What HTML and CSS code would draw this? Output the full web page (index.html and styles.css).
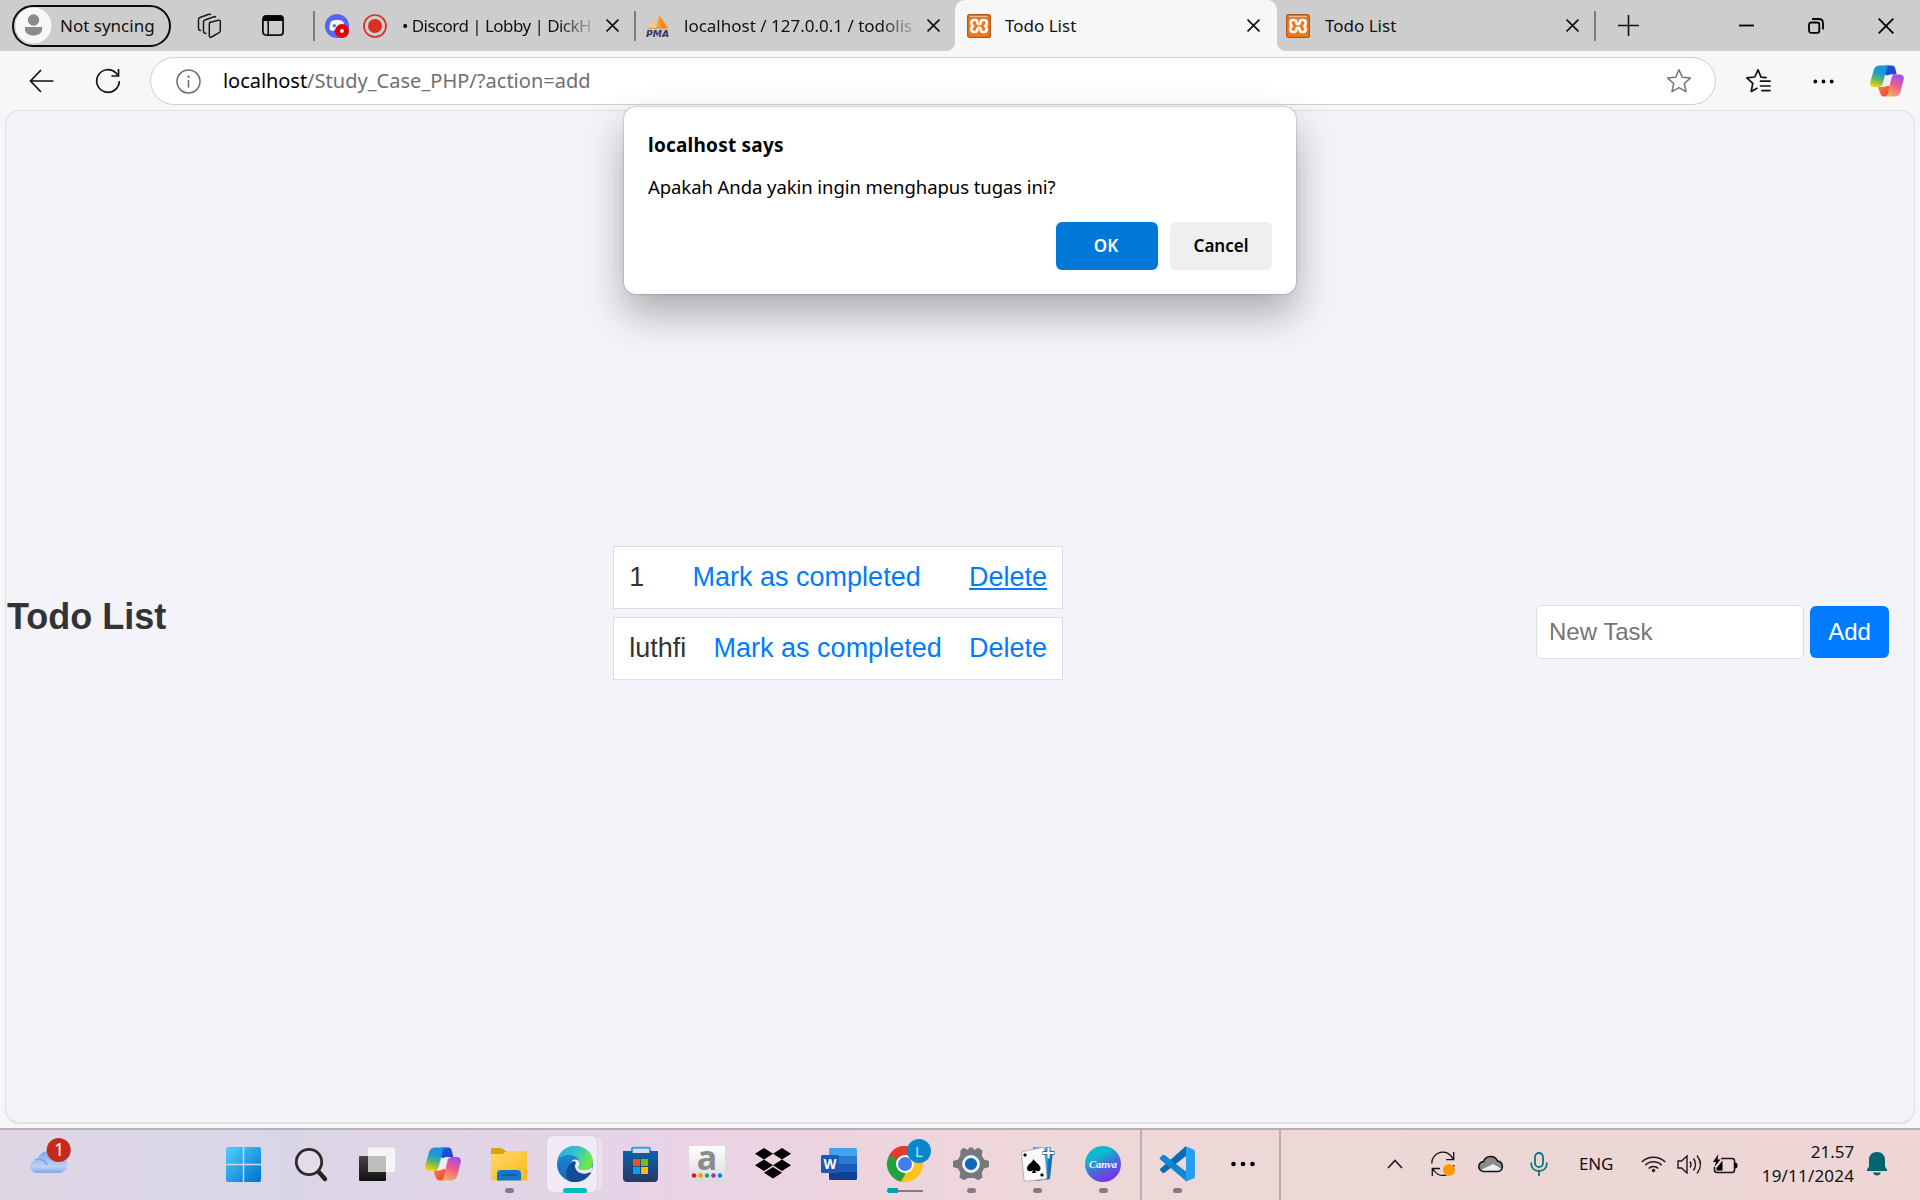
FILE: index.html
```html
<!DOCTYPE html>
<html lang="id">
<head>
<meta charset="utf-8">
<title>Todo List</title>
<link rel="stylesheet" href="styles.css">
</head>
<body>
<svg class="defs" width="0" height="0">
  <defs>
    <linearGradient id="cpA" x1="0.6" y1="0" x2="0.35" y2="1"><stop offset="0" stop-color="#1a8fe8"/><stop offset=".35" stop-color="#1b9bd8"/><stop offset=".62" stop-color="#52b471"/><stop offset="1" stop-color="#f5d000"/></linearGradient>
    <linearGradient id="cpB" x1="0" y1="0" x2="1" y2="1"><stop offset="0" stop-color="#1c55d8"/><stop offset="1" stop-color="#1d46c8"/></linearGradient>
    <linearGradient id="cpC" x1="0.7" y1="0" x2="0.3" y2="1"><stop offset="0" stop-color="#a04bf0"/><stop offset=".45" stop-color="#ec5a92"/><stop offset="1" stop-color="#ffad52"/></linearGradient>
    <linearGradient id="cpD" x1="0" y1="0" x2="1" y2="1"><stop offset="0" stop-color="#f7893a"/><stop offset="1" stop-color="#ee3a3a"/></linearGradient>
    <symbol id="copilot" viewBox="0 0 36 34">
      <path d="M16 .5h7c3 0 3.600 2 4.300 5l1 4.500h-4c-2.500 0-4.500.3-6.300 1.500L15 9z" fill="url(#cpB)"/>
      <path d="M8.500 23.500c3 0 6-.2 9-1.500h3l-1 8c-.6 2.500-1.500 3.500-3.500 3.500h-1.500c-3.500 0-4-4-6-10z" fill="url(#cpD)"/>
      <path d="M10.500.5H21c-2 .3-2.800 2-3.500 4.500L13.800 18.500c-.8 3-1.800 5-4.800 5H4.500C.8 23.500-.4 21.200.4 17.800L4 5C5 1.800 7 .5 10.500.5z" fill="url(#cpA)"/>
      <path d="M25.500 33.500H15.500c2 0 2.800-1.500 3.500-4L22.300 15.500c.8-3.200 1.700-5.500 4.900-5.500h4.300c3.700 0 4.900 2.300 4.100 5.700L32.300 28.500c-1 3.500-3.300 5-6.800 5z" fill="url(#cpC)"/>
      <path d="M17 11.800c1.600-1.200 3.500-1.600 6.600-1.700-1.400 1.400-2 3.800-2.600 6.400l-1 4.300c-1.300 1.800-3.800 2.500-8 2.700 1.200-1.200 2-3.300 2.600-5.600z" fill="#f1edf6"/>
    </symbol>
    <linearGradient id="xa" x1="0" y1="0" x2="0" y2="1"><stop offset="0" stop-color="#d8722c"/><stop offset=".3" stop-color="#f07a22"/><stop offset="1" stop-color="#f2761a"/></linearGradient>
    <symbol id="xampp" viewBox="0 0 24 24">
      <rect x=".6" y=".6" width="22.800" height="22.800" rx="2" fill="url(#xa)" stroke="#b3571a" stroke-width="1.200"/>
      <path d="M3 2.500h18" stroke="#f7b98a" stroke-width="1.200"/>
      <path d="M7 6H8q2.300 0 2.300 2.200T12 10.300t1.700-2.100T16 6h1q2.700 0 2.700 2.700T18 12q1.700.7 1.700 3.300T17 18h-1q-2.300 0-2.300-2.200T12 13.700t-1.700 2.100T8 18H7q-2.700 0-2.700-2.700T6 12Q4.300 11.300 4.300 8.700T7 6z" fill="none" stroke="#fff" stroke-width="2.500" stroke-linejoin="round"/>
    </symbol>
    <symbol id="close" viewBox="0 0 12 12"><path d="M.5.5l11 11M11.500.5l-11 11" stroke="#111" stroke-width="1.500" fill="none"/></symbol>
  </defs>
</svg>

<div class="browser">
  <header class="tabbar">
    <div class="profile">
      <svg width="37" height="37" viewBox="0 0 37 37"><circle cx="18.500" cy="18.500" r="18" fill="#f7f7f7"/><circle cx="18.500" cy="13" r="5.700" fill="#8a8a8a"/><path d="M10 20h17v2.500c0 3.500-3.500 6-8.500 6s-8.500-2.500-8.500-6z" fill="#8a8a8a"/></svg>
      <span class="ui t-profile">Not syncing</span>
    </div>
    <svg class="ic-work" width="26" height="26" viewBox="0 0 26 26" fill="none" stroke="#1b1b1b" stroke-width="1.500" stroke-linejoin="round"><path d="M13.500 9.500l9-2.300c1-.2 1.800.3 1.800 1.300v9.300c0 .8-.4 1.400-1.200 1.800L15.500 24c-1.200.5-2.200 0-2.200-1.200V11c0-.8.200-1.300 1.200-1.700z"/><path d="M10.500 20.500C8.500 20.500 7.500 20 7.500 18.500V9c0-1 .5-1.700 1.400-2L18 3.700c.8-.2 1.500 0 1.800.8M5 17.500C3.500 17.500 2.500 17 2.500 15.500V6.500c0-1 .5-1.700 1.400-2L13 1.300c.8-.2 1.500 0 1.800.8"/></svg>
    <svg class="ic-acts" width="22" height="21" viewBox="0 0 22 21"><rect x=".9" y=".9" width="20.200" height="19.200" rx="3" fill="none" stroke="#111" stroke-width="1.800"/><path d="M1 6V3.500C1 1.800 2 1 3.500 1h15C20 1 21 2 21 3.500V6z" fill="#000"/><path d="M6.200 6v14" stroke="#111" stroke-width="1.600"/></svg>
    <i class="sep s1"></i>
    <div class="tab tab-a">
      <svg width="24" height="24" viewBox="0 0 24 24"><circle cx="12" cy="12" r="12" fill="#5865f2"/><path d="M6 7.500c2-1.500 4-1.500 6-1.500s4 0 6 1.500c1 2 1.700 5 1.500 8-1.500 1.200-3 1.500-4 1.500l-1-1.500h-5l-1 1.500c-1 0-2.500-.3-4-1.500-.2-3 .5-6 1.500-8z" fill="#fff"/><ellipse cx="9.300" cy="11.800" rx="1.600" ry="1.800" fill="#5865f2"/><circle cx="17" cy="17" r="7" fill="#e00000"/><circle cx="17" cy="17" r="1.900" fill="#fff"/></svg>
      <svg class="rec" width="24" height="24" viewBox="0 0 24 24"><circle cx="12" cy="12" r="11" fill="none" stroke="#d93025" stroke-width="1.700"/><circle cx="12" cy="12" r="7" fill="#d93025"/></svg>
      <span class="ui t-discord fade">• Discord | Lobby | DickH</span>
      <svg class="x" width="13" height="13"><use href="#close"/></svg>
    </div>
    <i class="sep s2"></i>
    <div class="tab tab-b">
      <svg width="24" height="25" viewBox="0 0 24 25"><path d="M13.500 0l1 15H10z" fill="#f9a02b"/><path d="M14 3l8 12-7.500 0z" fill="#f08a12"/><path d="M9.500 5v10H2z" fill="#fbc77c"/><path d="M2 15.500l20 .3" stroke="#c9a36a"/><text x="0" y="24" class="pma" textLength="23" lengthAdjust="spacingAndGlyphs">PMA</text></svg>
      <span class="ui t-pma fade">localhost / 127.0.0.1 / todolis</span>
      <svg class="x" width="13" height="13"><use href="#close"/></svg>
    </div>
    <div class="tab tab-c">
      <svg width="24" height="24"><use href="#xampp"/></svg>
      <span class="ui t-todo">Todo List</span>
      <svg class="x" width="13" height="13"><use href="#close"/></svg>
    </div>
    <div class="tab tab-d">
      <svg width="24" height="24"><use href="#xampp"/></svg>
      <span class="ui t-todo">Todo List</span>
      <svg class="x" width="13" height="13"><use href="#close"/></svg>
    </div>
    <i class="sep s3"></i>
    <svg class="ic-plus" width="21" height="21" viewBox="0 0 21 21"><path d="M10.500 0v21M0 10.500h21" stroke="#111" stroke-width="1.600"/></svg>
    <div class="winctl">
      <svg width="15" height="16" viewBox="0 0 15 16"><path d="M0 7.500h15" stroke="#000" stroke-width="1.800"/></svg>
      <svg width="16" height="16" viewBox="0 0 16 16" fill="none" stroke="#000" stroke-width="1.800"><rect x="1" y="4.500" width="10.300" height="10.300" rx="2"/><path d="M4 1h6.500C13.500 1 15 2.500 15 5.200V11.500"/></svg>
      <svg width="16" height="16" viewBox="0 0 16 16"><path d="M.7.7l14.600 14.600M15.300.7L.7 15.300" stroke="#000" stroke-width="1.800"/></svg>
    </div>
  </header>

  <div class="toolbar">
    <svg class="ic-back" width="25" height="24" viewBox="0 0 25 24" fill="none" stroke="#111" stroke-width="1.700"><path d="M12 1L1.500 12 12 23M1.500 12H24.500"/></svg>
    <svg class="ic-reload" width="26" height="26" viewBox="0 0 26 26" fill="none" stroke="#111" stroke-width="1.700"><path d="M24.300 13A11.300 11.300 0 1 1 21 5l2 2.300"/><path d="M23.500 1v7h-7"/></svg>
    <div class="address">
      <svg class="ic-info" width="25" height="25" viewBox="0 0 25 25" fill="none" stroke="#6b6b6b"><circle cx="12.500" cy="12.500" r="11.500" stroke-width="1.500"/><path d="M12.500 11v7.500" stroke-width="1.600"/><circle cx="12.500" cy="7.600" r="1.200" fill="#6b6b6b" stroke="none"/></svg>
      <span class="url"><b>localhost</b>/Study_Case_PHP/?action=add</span>
      <svg class="ic-star" width="26" height="26" viewBox="0 0 26 26"><path d="M13 1.800l3.300 7.400 8 .9-6 5.400 1.700 8.200L13 19.700l-7 4 1.700-8.200-6-5.400 8-.9z" fill="none" stroke="#757575" stroke-width="1.500" stroke-linejoin="round"/></svg>
    </div>
    <svg class="ic-fav" width="26" height="26" viewBox="0 0 26 26" fill="none" stroke="#111" stroke-width="1.700" stroke-linejoin="round" stroke-linecap="round"><path d="M21 9.700l-5-.6L13 1.800 9.800 9l-8 .9 6 5.400-1.600 8.200L12 20.300"/><path d="M15.500 13.200H25M15.500 18H25M17 22.700h8"/></svg>
    <svg class="ic-dots" width="21" height="5" viewBox="0 0 21 5"><circle cx="2.300" cy="2.500" r="1.900"/><circle cx="10.500" cy="2.500" r="1.900"/><circle cx="18.700" cy="2.500" r="1.900"/></svg>
    <svg class="ic-cop" width="34" height="32"><use href="#copilot"/></svg>
  </div>

  <main class="page">
    <h1>Todo List</h1>
    <ul class="tasks">
      <li><span>1</span><a>Mark as completed</a><a class="hover">Delete</a></li>
      <li><span>luthfi</span><a>Mark as completed</a><a>Delete</a></li>
    </ul>
    <form class="add"><input type="text" placeholder="New Task"><button type="button">Add</button></form>
  </main>

  <section class="dialog">
    <h2>localhost says</h2>
    <p>Apakah Anda yakin ingin menghapus tugas ini?</p>
    <div class="actions"><button class="ok" type="button">OK</button><button type="button">Cancel</button></div>
  </section>
</div>

<footer class="taskbar">
  <div class="widgets">
    <svg width="46" height="40" viewBox="0 0 46 40"><defs><linearGradient id="cl" x1="0" y1="0" x2="0" y2="1"><stop offset="0" stop-color="#7fa6e8"/><stop offset=".7" stop-color="#bcd2f5"/><stop offset="1" stop-color="#7ea9ea"/></linearGradient></defs><path d="M6.500 35a6.500 6.500 0 0 1 0-13 5 5 0 0 1 1-.5A11.500 11.500 0 0 1 28 18h1a8.500 8.500 0 0 1 0 17z" fill="url(#cl)"/><path d="M5 22c6-2 11 1 12 5" stroke="#7fa3df" stroke-width="1.500" fill="none"/><circle cx="28.700" cy="12" r="12" fill="#c42b1c"/><text x="29.200" y="18" class="badge">1</text></svg>
  </div>
  <div class="apps">
    <div class="app"><svg width="36" height="36" viewBox="0 0 36 36"><defs><linearGradient id="wn" x1="0" y1="0" x2="1" y2="1"><stop offset="0" stop-color="#4cd2fc"/><stop offset="1" stop-color="#0070d0"/></linearGradient></defs><path d="M-1 3q0-2 2-2h14.800v16.800H-1zM17.200 1H32q2 0 2 2v14.800H17.200zM-1 19.200h16.800V36H1q-2 0-2-2zM17.200 19.200H34V34q0 2-2 2H17.200z" fill="url(#wn)"/></svg></div>
    <div class="app"><svg width="36" height="36" viewBox="0 0 36 36"><path d="M24.500 24.500l7.500 8.500" stroke="#222" stroke-width="4.400" stroke-linecap="round"/><circle cx="16" cy="16" r="12.700" fill="#e4dde9" stroke="#2c2c2c" stroke-width="2.800"/></svg></div>
    <div class="app"><svg width="36" height="36" viewBox="0 0 36 36"><defs><linearGradient id="tv" x1="0" y1="0" x2="0" y2="1"><stop offset="0" stop-color="#484644"/><stop offset="1" stop-color="#111"/></linearGradient></defs><rect y="10" width="27" height="25" rx="1" fill="url(#tv)"/><rect x="9" y="1.500" width="27" height="24.500" rx="1" fill="#f5f5f5"/><path d="M9 10h18v16H9z" fill="#bdbdbd"/></svg></div>
    <div class="app"><svg width="36" height="36" viewBox="0 -1 36 36"><use href="#copilot" width="36" height="34"/></svg></div>
    <div class="app run"><svg width="36" height="36" viewBox="0 0 36 36"><defs><linearGradient id="fo" x1="0" y1="0" x2="1" y2="1"><stop offset="0" stop-color="#ffd96b"/><stop offset="1" stop-color="#fbb917"/></linearGradient></defs><path d="M0 9V3.500Q0 2 1.500 2H9q2 0 3.500 1.500L15 5h19.500Q36 5 36 6.500V10H0z" fill="#dfa00c"/><path d="M0 8h10q2 0 3.500-1.500T16 5h18.500Q36 5 36 6.500V33q0 1.500-1.500 1.500h-33Q0 34.500 0 33z" fill="url(#fo)"/><path d="M6 34.500V28q0-4 4-4h16q4 0 4 4v6.500z" fill="#1478c8"/><path d="M11 29h14" stroke="#0c5aa0" stroke-width="1.500" stroke-linecap="round"/></svg></div>
    <div class="app active"><svg width="36" height="36" viewBox="0 0 36 36"><defs><linearGradient id="e1" x1="0" y1="0" x2="1" y2=".4"><stop offset="0" stop-color="#2aa8e0"/><stop offset=".5" stop-color="#2fc3d2"/><stop offset="1" stop-color="#6cea45"/></linearGradient><linearGradient id="e2" x1="0" y1="0" x2="0" y2="1"><stop offset="0" stop-color="#1c90d8"/><stop offset="1" stop-color="#1268b8"/></linearGradient></defs><circle cx="18" cy="18" r="18" fill="url(#e2)"/><path d="M.8 14C2 6 9 0 18 0c10 0 18 7 18 15.500 0 6-4.500 8.500-9 8.500-4 0-6-1.500-6-2.500s1.500-1.500 1.500-4.500c0-4-4-8-10-8C7 9 2.500 11 .8 14z" fill="url(#e1)"/><path d="M12 34.500C8 31 8 22 14 17c-1 8 4 13 12 13 3 0 5.500-1 7.300-2.400C30 33 25 36 18 36c-2.500 0-4.500-.5-6-1.500z" fill="#144b94"/><path d="M21 21.500c0 1 2 2.500 6 2.500 4 0 7-1.500 8.500-4L34.500 26.500C30 29 14 30 14 17c.5-2 2-3.500 4-3.500 3 0 4.500 2 4.500 4s-1.500 3-1.500 4z" fill="#efeaf5"/><path d="M14 17c-1.500 8 4 13 12 13 3.500 0 6.500-1 7.800-2.400.5-.8-.3-1.600-1.300-1.100-6.500 3-12.500 0-14-4-.8-2-.5-4 .5-6-1.500-2-4-1.500-5 .5z" fill="#144b94"/></svg></div>
    <div class="app"><svg width="36" height="36" viewBox="0 0 36 36"><defs><linearGradient id="st" x1="0" y1="0" x2="0" y2="1"><stop offset="0" stop-color="#0c62ac"/><stop offset="1" stop-color="#26395e"/></linearGradient></defs><path d="M9 8V2.500Q9 1.800 10 1.800h16q1 0 1 .7V8" fill="none" stroke="#22a6f0" stroke-width="2"/><path d="M0 5h9v2h18V5h8v27q0 4-4 4H4q-4 0-4-4z" fill="url(#st)"/><path d="M10 13h7v7h-7z" fill="#f25022"/><path d="M18 13h7v7h-7z" fill="#7fba00"/><path d="M10 21h7v7h-7z" fill="#00a4ef"/><path d="M18 21h7v7h-7z" fill="#ffb900"/></svg></div>
    <div class="app"><svg width="36" height="36" viewBox="0 0 36 36"><defs><linearGradient id="am" x1="0" y1="0" x2="0" y2="1"><stop offset="0" stop-color="#fff"/><stop offset="1" stop-color="#d9d9d9"/></linearGradient></defs><path d="M0 0h36v36H0z" fill="url(#am)"/><text x="18" y="23.500" class="am">a</text><circle cx="5" cy="29.500" r="2.300" fill="#e11"/><circle cx="11.500" cy="29.500" r="2.300" fill="#f90"/><circle cx="18" cy="29.500" r="2.300" fill="#2a6"/><circle cx="24.500" cy="29.500" r="2.300" fill="#93c"/><circle cx="31" cy="29.500" r="2.300" fill="#08d"/></svg></div>
    <div class="app"><svg width="36" height="36" viewBox="0 0 36 36"><path d="M9 2l9 5.700-9 5.800-9-5.800zM27 2l9 5.700-9 5.800-9-5.800zM9 13.500l9 5.800L9 25l-9-5.700zM27 13.500l9 5.800-9 5.700-9-5.700zM18 21l9 5.700-9 5.800-9-5.800z"/></svg></div>
    <div class="app"><svg width="36" height="36" viewBox="0 0 36 36"><path d="M8 10V3.500Q8 2 9.500 2h25Q36 2 36 3.500V10z" fill="#41a5ee"/><path d="M8 10h28v8H8z" fill="#2b7cd3"/><path d="M8 18h28v8H8z" fill="#185abd"/><path d="M8 26h28v6.500q0 1.500-1.500 1.500h-25Q8 34 8 32.500z" fill="#103f91"/><rect y="9" width="18" height="18" rx="1.500" fill="#1d5ab8"/><text x="9" y="23" class="wd" textLength="13" lengthAdjust="spacingAndGlyphs">W</text></svg></div>
    <div class="app multi"><svg width="44" height="43" viewBox="0 -7 44 43"><path d="M18 18L2.400 9A18 18 0 0 1 33.600 9z" fill="#e33b2e"/><path d="M18 18L33.600 9A18 18 0 0 1 18 36z" fill="#fcc31e"/><path d="M18 18v18A18 18 0 0 1 2.400 9z" fill="#25a03f"/><path d="M18 9h15.600L25.800 22.500z" fill="#fcc31e"/><path d="M18 9H2.400L10.200 22.500z" fill="#25a03f"/><path d="M2.400 9A18 18 0 0 1 33.600 9H18l-7.800 4.500z" fill="#e33b2e"/><path d="M25.800 22.500L18 36l-4-.4L22 22z" fill="#fcc31e"/><circle cx="18" cy="18" r="9" fill="#fff"/><circle cx="18" cy="18" r="7" fill="#3f7df0"/><circle cx="32" cy="5" r="12" fill="#0a86cc"/><text x="32" y="10.500" class="lb">L</text></svg></div>
    <div class="app run"><svg width="36" height="36" viewBox="0 0 36 36"><path d="M7.500 4.500L10.500 1.800 15 4l1-2.500h4L21 4l4.500-2.200 4 2.700-.7 5L31 13.500l5 1.500v6l-5 1.500-2.200 4 .7 5-4 2.700L21 32l-2 0h-2l-2 0-4.500 2.200-4-2.700.7-5L5 22.500 0 21v-6l5-1.500 2.200-4z" fill="#75797f"/><circle cx="18" cy="18" r="7.500" fill="#0f66bd" stroke="#eef0f2" stroke-width="2.800"/></svg></div>
    <div class="app run cards"><svg width="36" height="36" viewBox="0 0 36 36"><path d="M14 2l18 3-3 28-14 2z" fill="#156fc4"/><path d="M12 1l15 1-1 31-12 1z" fill="#37a7ee"/><path d="M2 5.500l19-4Q23 1 23.500 3l2.500 28q0 2-2 2.300l-19 2q-2 0-2-2L.5 8Q.5 6 2 5.500z" fill="#fafafa" stroke="#999" stroke-width=".7"/><path d="M12.500 13c2 4 7 5.500 7 9.500 0 3-3.500 3.500-5.500 1.500l1 3h-4l1-3c-2 2-6 1.500-6-1.500 0-4 5-5.500 6.500-9.500z" fill="#000"/><path d="M4 7l2 2-2 2-2-2zM21 27l2 2-2 2-2-2z" fill="#000"/><path d="M27.500 1v12M21.500 7h12" stroke="#2a6ea8" stroke-width="4"/><path d="M27.500 1.500v11M22 7h11" stroke="#fff" stroke-width="2.200"/></svg></div>
    <div class="app run"><svg width="36" height="36" viewBox="0 0 36 36"><defs><linearGradient id="cv" x1=".2" y1="0" x2=".7" y2="1"><stop offset="0" stop-color="#00c4cc"/><stop offset=".3" stop-color="#12b4d0"/><stop offset=".6" stop-color="#4a68d8"/><stop offset="1" stop-color="#7d2ae8"/></linearGradient></defs><circle cx="18" cy="18" r="18" fill="url(#cv)"/><text x="18" y="21.500" class="cv" textLength="28" lengthAdjust="spacingAndGlyphs">Canva</text></svg></div>
    <i class="div d1"></i>
    <div class="app run vs"><svg width="36" height="36" viewBox="0 0 36 36"><path d="M.5 12.500L3.500 9.300q1-.8 2 0L27 25.500V35z" fill="#1387d2"/><path d="M.5 23.500l3 3.200q1 .8 2 0L27 10V0z" fill="#0a6ab4"/><path d="M.5 12.500L3.500 9.300q1-.8 2 0L16 17.200l-5 5z" fill="#1387d2"/><path d="M26 0l8.500 3.500Q36 4 36 6v24q0 2-1.500 2.500L26 36q1-.8 1-2.500v-31Q27 .8 26 0z" fill="#25a0f0"/></svg></div>
    <div class="app"><svg width="36" height="36" viewBox="0 0 36 36"><circle cx="8.500" cy="18" r="2.300"/><circle cx="18" cy="18" r="2.300"/><circle cx="27.500" cy="18" r="2.300"/></svg></div>
    <i class="div d2"></i>
  </div>
  <div class="tray">
    <svg width="16" height="10" viewBox="0 0 16 10"><path d="M1 9l7-7.500L15 9" fill="none" stroke="#222" stroke-width="1.800"/></svg>
    <svg class="g-sync" width="24" height="24" viewBox="0 0 24 24" fill="none" stroke="#111" stroke-width="1.300"><path d="M.8 11.500A11 11 0 0 1 22 7M22.700 0v7.700H15M23 13A11 11 0 0 1 2 17M1.300 24v-7.500H9"/><circle cx="18" cy="18" r="6" fill="#ff9a00" stroke="none"/></svg>
    <svg class="g-od" width="26" height="18" viewBox="0 0 26 18"><path d="M6 16.500a5 5 0 0 1-.5-10A7.500 7.500 0 0 1 19.500 6 5.300 5.300 0 0 1 20 16.500z" fill="#8a8a8a"/><path d="M3 15l12-6 9 5q-1 2.500-4 2.500H6q-2 0-3-1.500z" fill="#eee"/><path d="M6 16.500a5 5 0 0 1-.5-10A7.500 7.500 0 0 1 19.500 6 5.300 5.300 0 0 1 20 16.500z" fill="none" stroke="#111" stroke-width="1.500"/></svg>
    <svg class="g-mic" width="18" height="24" viewBox="0 0 18 24" fill="none" stroke="#0f7681" stroke-width="1.800"><rect x="5" y="1" width="8" height="14" rx="4"/><path d="M1.200 10.500v1c0 4.500 3 7.500 7.800 7.500s7.800-3 7.800-7.500v-1M9 19v5"/></svg>
    <span class="ui t-eng">ENG</span>
    <svg class="g-wifi" width="25" height="18" viewBox="0 0 25 18" fill="none" stroke="#1b1b1b" stroke-width="1.500"><path d="M.8 7A16.500 16.500 0 0 1 24.200 7M4.300 10.300A11.500 11.500 0 0 1 20.700 10.300M7.700 13.500A6.500 6.500 0 0 1 17.300 13.500"/><circle cx="12.500" cy="15.500" r="1.700" fill="#1b1b1b" stroke="none"/></svg>
    <svg class="g-vol" width="25" height="21" viewBox="0 0 25 21" fill="none" stroke="#1b1b1b" stroke-width="1.400"><path d="M1 7h3.500L10 2v17l-5.500-5H1zM13 7.500q2 3 0 6M16.500 4.500q4 6 0 12M20 1.500q7 9 0 18"/></svg>
    <svg class="g-bat" width="25" height="20" viewBox="0 0 25 20"><path d="M8 4.500h11q2.500 0 2.500 2.500v9q0 2.500-2.500 2.500H4Q1.500 18.500 1.500 16v-3" fill="none" stroke="#1b1b1b" stroke-width="1.600"/><path d="M22 8.500q2.500 0 2.500 3t-2.500 3z"/><path d="M9.500 6.500V16.500H3.500V14z"/><path d="M5.500 0L0 8h3L1.500 13 7.500 5.500h-3z"/></svg>
    <div class="clock"><span class="ui">21.57</span><span class="ui t-date">19/11/2024</span></div>
    <svg class="g-bell" width="20" height="24" viewBox="0 0 20 24" fill="#00656f"><path d="M10 0c5 0 8 3.500 8 8v6.500l2 3V19H0v-1.500l2-3V8c0-4.500 3-8 8-8zM6 20.500h8q-1 3-4 3t-4-3z"/></svg>
  </div>
</footer>
</body>
</html>
```
FILE: styles.css
```css
* { box-sizing: border-box; }
html, body { margin: 0; height: 100%; overflow: hidden; }
body {
  width: 1920px;
  height: 1200px;
  display: flex;
  flex-direction: column;
  background: #f7f7f7;
  font-family: "Noto Sans", "Open Sans", sans-serif;
  color: #000;
}
svg { display: block; flex: none; overflow: visible; }
.defs { position: absolute; }
.ui { font-size: 17px; line-height: 24px; white-space: nowrap; color: #111; }

.browser { position: relative; height: 1128px; display: flex; flex-direction: column; }

/* Tab strip */
.tabbar { height: 51px; flex: none; display: flex; align-items: center; background: #cdcdcd; }
.profile {
  width: 159px; height: 42px; margin-left: 12px; padding-left: 1px;
  display: flex; align-items: center; gap: 8px;
  border: 2px solid #0b0b0b; border-radius: 21px;
}
.ic-work { margin-left: 25px; }
.ic-acts { margin-left: 40px; }
.sep { width: 2px; height: 30px; flex: none; background: #7c7c7c; }
.s1 { margin-left: 29px; }
.tab { height: 51px; display: flex; align-items: center; flex: none; }
.tab .x { margin-left: auto; }
.tab-a { width: 319px; padding: 0 15px 0 10px; }
.rec { margin-left: 14px; }
.t-discord { margin-left: 15px; width: 190px; letter-spacing: -0.55px; }
.fade {
  overflow: hidden;
  -webkit-mask-image: linear-gradient(90deg, #000 calc(100% - 34px), rgba(0,0,0,.15));
  mask-image: linear-gradient(90deg, #000 calc(100% - 34px), rgba(0,0,0,.15));
}
.tab-b { width: 319px; padding: 0 15px 0 10px; border-bottom-right-radius: 8px; }
.t-pma { margin-left: 14px; width: 230px; }
.tab-c {
  position: relative; width: 322px; padding: 0 17px 0 12px;
  background: #f7f7f7; border-radius: 10px 10px 0 0;
}
.tab-c::before, .tab-c::after {
  content: ""; position: absolute; bottom: 0; width: 8px; height: 8px;
}
.tab-c::before { left: -8px; background: radial-gradient(circle at 0 0, #cdcdcd 7.5px, #f7f7f7 8px); }
.tab-c::after { right: -8px; background: radial-gradient(circle at 100% 0, #cdcdcd 7.5px, #f7f7f7 8px); }
.t-todo { margin-left: 14px; }
.tab-d { width: 317px; padding: 0 15px 0 9px; }
.tab-d .t-todo { margin-left: 15px; }
.ic-plus { margin-left: 22px; }
.winctl { margin-left: auto; margin-right: 26px; display: flex; gap: 54px; }
.pma { font: italic bold 9px "DejaVu Sans", sans-serif; fill: #33356b; }

/* Toolbar */
.toolbar { height: 60px; flex: none; display: flex; align-items: center; }
.ic-back { margin-left: 29px; }
.ic-reload { margin-left: 41px; }
.address {
  width: 1566px; height: 48px; margin-left: 29px; padding: 0 23px 0 25px;
  display: flex; align-items: center;
  background: #fff; border: 1.500px solid #cfcfcf; border-radius: 24px;
}
.url { margin-left: 22px; font-size: 20px; letter-spacing: .02px; line-height: 26px; color: #6f6f6f; white-space: nowrap; }
.url b { font-weight: 400; color: #000; letter-spacing: -0.05px; }
.ic-star { margin-left: auto; }
.ic-fav { margin-left: 29px; }
.ic-dots { margin-left: 42px; }
.ic-cop { margin-left: 36px; }

/* Todo page */
.page {
  margin: -1px 5px 0 5px; height: 1013px; padding: 0 25px 0 1px;
  display: flex; align-items: center; justify-content: space-between;
  background: #f4f3f9; border: 1px solid #e0e0e2; border-radius: 14px;
  font-family: "Liberation Sans", Arial, sans-serif; color: #333;
  box-shadow: 0 1px 1px #e4e4e4;
}
.page h1 { margin: 0; font-size: 36px; line-height: 40px; }
.tasks { list-style: none; margin: 0 26px 0 0; padding: 0; width: 450px; }
.tasks li {
  height: 63px; margin-bottom: 8px; padding: 0 15px; display: flex; align-items: center; justify-content: space-between;
  background: #fff; border: 1px solid #ddd; font-size: 27px; line-height: 31px;
}
.tasks a { color: #007bff; }
.tasks .hover { text-decoration: underline; }
.add { display: flex; align-items: center; gap: 6px; margin: 30px 0 0; }
.add input {
  width: 268px; height: 54px; padding: 0 12px; border: 1px solid #ddd; border-radius: 6px;
  background: #fff; font: 24px "Liberation Sans", Arial, sans-serif;
}
.add input::placeholder { color: #757575; }
.add button {
  width: 79px; height: 52px; padding: 0; border: 0; border-radius: 6px;
  background: #007bff; color: #fff; font: 24px "Liberation Sans", Arial, sans-serif;
}

/* Confirmation dialog floating over the page */
.dialog {
  position: absolute; left: 624px; top: 107px; width: 672px; height: 187px; padding: 24px;
  background: #fff; border-radius: 12px;
  box-shadow: 0 0 2px rgba(0,0,0,.4), 0 20px 40px rgba(0,0,0,.3);
}
.dialog h2 { margin: 0; font-size: 19px; letter-spacing: .22px; line-height: 28px; font-weight: 700; white-space: nowrap; }
.dialog p { margin: 15px 0 0; height: 24px; line-height: 25px; font-size: 18.5px; letter-spacing: -.07px; overflow: hidden; white-space: nowrap; }
.actions { display: flex; justify-content: flex-end; gap: 12px; margin-top: 24px; }
.actions button {
  width: 102px; height: 48px; padding: 0 0 2px 0; border: 0; border-radius: 6px; background: #efefef; color: #000;
  font: 600 17px "Noto Sans", sans-serif;
}
.actions .ok { padding-right: 2px; background: #0078d7; color: #fff; }

/* Taskbar */
.taskbar {
  height: 72px; display: flex; border-top: 2px solid #b6afb8;
  background: linear-gradient(90deg, #dfd6e5 0, #d9d6e7 13%, #dfd5e6 22%, #e8d3e7 34%, #ecd3e0 42%, #eed7d8 55%, #ecd7d6 75%, #eed5d6 100%);
}
.widgets { width: 212px; padding: 8px 0 0 30px; }
.apps { display: flex; }
.app { position: relative; width: 66px; padding: 16px 0 0 15px; }
.app svg { position: relative; }
.run::after, .active::after, .multi::after {
  content: ""; position: absolute; left: 29px; top: 58px; width: 9px; height: 5px; border-radius: 3px; background: #857b84;
}
.active::before {
  content: ""; position: absolute; left: 5px; top: 6px; width: 50px; height: 56px; border-radius: 6px;
  background: #f0ebf6; box-shadow: 0 0 0 1px #d9d2e0, 6px 0 0 -1px #ebe2f0;
}
.active::after { left: 21px; width: 24px; background: #04b8c6; }
.multi { padding-top: 9px; }
.multi::after { left: 15px; width: 36px; background: linear-gradient(90deg, #00a3b4 11px, transparent 11px), linear-gradient(#857b84, #857b84) 0 2px / 100% 2px no-repeat; }
.cards { padding-left: 17px; }
.div { width: 2px; background: #bcaeb0; }
.d1 { margin-left: 4px; margin-right: 2px; }
.d2 { margin-left: 3px; }
.badge { font: 18px "Noto Sans", sans-serif; fill: #fff; text-anchor: middle; }
.am { font: bold 34px "Noto Sans", sans-serif; fill: #8c8c8c; text-anchor: middle; }
.wd { font: bold 14px "Noto Sans", sans-serif; fill: #fff; text-anchor: middle; }
.lb { font: 15px "Noto Sans", sans-serif; fill: #cfe8f8; text-anchor: middle; }
.cv { font: italic bold 11px "Liberation Serif", serif; fill: #fff; text-anchor: middle; }
.tray { flex: 1; display: flex; align-items: center; padding-bottom: 2px; padding-left: 106px; }
.g-sync { margin-left: 28px; }
.g-od { margin-left: 23px; }
.g-mic { margin-left: 26px; }
.t-eng { margin-left: 31px; letter-spacing: -.2px; }
.g-wifi { margin-left: 28px; }
.g-vol { margin-left: 11px; }
.g-bat { margin-left: 11px; }
.clock { width: 116px; display: flex; flex-direction: column; align-items: flex-end; }
.t-date { letter-spacing: .2px; }
.g-bell { margin-left: 13px; }
```
